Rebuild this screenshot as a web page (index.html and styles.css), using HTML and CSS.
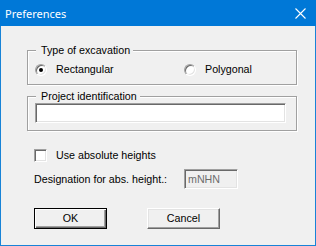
FILE: index.html
```html
<!DOCTYPE html>
<html lang="en">
<head>
    <meta charset="UTF-8">
    <title>Preferences</title>
    <link rel="stylesheet" href="styles.css">
</head>
<body>
    <div class="window">
        <div class="titlebar">
            <span class="title">Preferences</span>
            <svg class="close" width="11" height="11" viewBox="0 0 11 11">
                <path d="M0.5 0.5 L10.5 10.5 M10.5 0.5 L0.5 10.5" stroke="#fff" stroke-width="1.1" fill="none"/>
            </svg>
        </div>

        <div class="content">
            <div class="group group-type">
                <div class="legend">Type of excavation</div>
                <div class="radios">
                    <label class="option"><span class="radio checked"></span>Rectangular</label>
                    <label class="option"><span class="radio"></span>Polygonal</label>
                </div>
            </div>

            <div class="group group-project">
                <div class="legend">Project identification</div>
                <div class="field"></div>
            </div>

            <label class="check-row"><span class="checkbox"></span>Use absolute heights</label>

            <div class="designation">
                <span class="designation-label">Designation for abs. height.:</span>
                <div class="field small disabled">mNHN</div>
            </div>

            <div class="buttons">
                <div class="btn default">OK</div>
                <div class="btn">Cancel</div>
            </div>
        </div>
    </div>
</body>
</html>
```

FILE: styles.css
```css
body {
    margin: 0;
    padding: 0;
    font-family: 'Liberation Sans', Arial, sans-serif;
    font-size: 10.7px;
    line-height: 13px;
    color: #000;
}

.window {
    width: 316px;
    height: 246px;
    box-sizing: border-box;
    background-color: #f0f0f0;
    border: 1px solid #1883d7;
    border-top: none;
}

.titlebar {
    height: 26px;
    margin: 0 -1px;
    background-color: #0078d7;
    display: flex;
    align-items: center;
    justify-content: space-between;
    padding: 0 10px 0 5px;
}

.title {
    font-family: 'Noto Sans', sans-serif;
    font-size: 11px;
    color: #fff;
}

.close {
    display: block;
}

.group {
    width: 270px;
    box-sizing: border-box;
    margin-left: 26px;
    border: 1px solid #a0a0a0;
    box-shadow: inset 1px 1px #fff, 1px 1px #fff;
    padding: 0 0 7px 7px;
}

.group-type {
    margin-top: 24px;
    padding-bottom: 8px;
}

.group-project {
    margin-top: 11px;
}

.legend {
    display: table;
    height: 13px;
    margin: -7px 0 0 1px;
    padding: 0 3px 0 5px;
    background-color: #f0f0f0;
}

.radios {
    margin-top: 6px;
    display: grid;
    grid-template-columns: 149px auto;
}

.option {
    display: flex;
    align-items: center;
    height: 13px;
}

.radio {
    width: 12px;
    height: 12px;
    box-sizing: border-box;
    border-radius: 50%;
    border: 1px solid;
    border-color: #a0a0a0 #fff #fff #a0a0a0;
    background-color: #fff;
    box-shadow: inset 1px 1px #696969, inset -1px -1px #e3e3e3;
    margin-right: 9px;
    display: flex;
    justify-content: center;
    align-items: center;
}

.radio.checked:after {
    content: '';
    width: 4px;
    height: 4px;
    border-radius: 50%;
    background-color: #000;
}

.field {
    width: 251px;
    height: 20px;
    box-sizing: border-box;
    border: 1px solid;
    border-color: #a0a0a0 #fff #fff #a0a0a0;
    box-shadow: inset 1px 1px #696969, inset -1px -1px #e3e3e3;
    background-color: #fff;
}

.field.small {
    width: 54px;
    padding: 3px 0 0 3px;
}

.field.disabled {
    background-color: #f0f0f0;
    color: #6d6d6d;
}

.check-row {
    display: flex;
    align-items: center;
    height: 13px;
    margin: 18px 0 0 33px;
}

.checkbox {
    width: 13px;
    height: 13px;
    box-sizing: border-box;
    border: 1px solid;
    border-color: #a0a0a0 #fff #fff #a0a0a0;
    box-shadow: inset 1px 1px #696969, inset -1px -1px #e3e3e3;
    background-color: #fff;
    margin-right: 9px;
}

.designation {
    display: flex;
    align-items: center;
    margin: 7px 0 0 33px;
}

.designation-label {
    width: 150px;
}

.buttons {
    display: flex;
    gap: 40px;
    margin: 19px 0 0 33px;
}

.btn {
    width: 73px;
    height: 21px;
    box-sizing: border-box;
    display: flex;
    justify-content: center;
    align-items: center;
    background-color: #f0f0f0;
    border: 1px solid;
    border-color: #fff #696969 #696969 #fff;
    box-shadow: inset -1px -1px #a0a0a0, inset 1px 1px #e3e3e3;
}

.btn.default {
    border-color: #000;
    box-shadow: inset 1px 1px #fff, inset -1px -1px #696969, inset -2px -2px #a0a0a0;
}
```
